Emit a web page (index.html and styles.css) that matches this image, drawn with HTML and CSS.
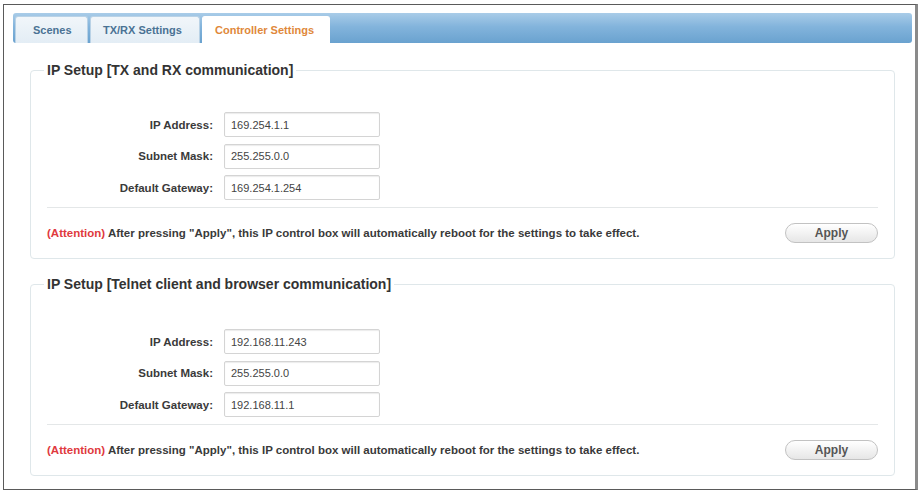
FILE: index.html
```html
<!DOCTYPE html>
<html>
<head>
<meta charset="utf-8">
<title>Controller Settings</title>
<link rel="stylesheet" href="styles.css">
</head>
<body>
<div class="frame">
  <div class="tabs">
    <div class="tab">Scenes</div>
    <div class="tab">TX/RX Settings</div>
    <div class="tab active">Controller Settings</div>
  </div>
  <div class="panel">
    <fieldset class="group first">
      <legend>IP Setup [TX and RX communication]</legend>
      <div class="rows">
        <label>IP Address:</label><div class="input">169.254.1.1</div>
        <label>Subnet Mask:</label><div class="input">255.255.0.0</div>
        <label>Default Gateway:</label><div class="input">169.254.1.254</div>
      </div>
      <div class="rule"></div>
      <div class="footer">
        <p class="note"><span class="attn">(Attention)</span> After pressing "Apply", this IP control box will automatically reboot for the settings to take effect.</p>
        <button class="apply">Apply</button>
      </div>
    </fieldset>
    <fieldset class="group second">
      <legend>IP Setup [Telnet client and browser communication]</legend>
      <div class="rows">
        <label>IP Address:</label><div class="input">192.168.11.243</div>
        <label>Subnet Mask:</label><div class="input">255.255.0.0</div>
        <label>Default Gateway:</label><div class="input">192.168.11.1</div>
      </div>
      <div class="rule"></div>
      <div class="footer">
        <p class="note"><span class="attn">(Attention)</span> After pressing "Apply", this IP control box will automatically reboot for the settings to take effect.</p>
        <button class="apply">Apply</button>
      </div>
    </fieldset>
  </div>
</div>
</body>
</html>
```
FILE: styles.css
```css
* { box-sizing: border-box; }
html, body { margin: 0; padding: 0; background: #ffffff; }
body {
  font-family: "Liberation Sans", Arial, sans-serif;
  color: #333;
  width: 923px;
  height: 493px;
  overflow: hidden;
}
.frame {
  margin: 4px 0 0 3px;
  width: 915px;
  height: 486px;
  border: 1px solid #5a5a5a;
  border-right: 3px solid #8a8a8a;
  padding: 8px 3px 0 9px;
  background: #fff;
}
.tabs {
  display: flex;
  align-items: flex-end;
  height: 30px;
  padding-left: 2px;
  gap: 2px;
  border-radius: 3px;
  background: linear-gradient(#a9cce8 0%, #83b4dc 45%, #6aa2cf 100%);
}
.tab {
  height: 27px;
  padding: 0 17px;
  display: flex;
  align-items: center;
  font-size: 11px;
  font-weight: bold;
  color: #4a7294;
  background: linear-gradient(#f1f6fa, #e3edf5);
  border: 1px solid #b9d2e6;
  border-bottom: none;
  border-radius: 3px 3px 0 0;
}
.tab:first-child { width: 73px; }
.tab:nth-child(2) { width: 110px; padding: 0 12px; }
.tab.active {
  width: 128px;
  padding: 0 12px;
  background: #fff;
  color: #e0883a;
  border-color: #fff;
}
.panel {
  padding: 19px 0 0 17px;
  width: 882px;
}
.group {
  margin: 0;
  padding: 0 16px 15px 16px;
  border: 1px solid #dfe7ea;
  border-radius: 4px;
  width: 865px;
}
.group.second { margin-top: 17px; }
legend {
  font-size: 14px;
  font-weight: bold;
  color: #333;
  padding: 0 3px;
  margin-left: -3px;
  line-height: 16px;
}
.rows {
  display: grid;
  grid-template-columns: 166px 156px;
  column-gap: 11px;
  row-gap: 6.5px;
  align-items: center;
  margin-top: 34px;
}
.second .rows { margin-top: 37px; }
label {
  text-align: right;
  font-size: 11.5px;
  font-weight: bold;
  color: #3a3a3a;
}
.input {
  height: 25px;
  border: 1px solid #d4d4d4;
  border-radius: 2px;
  box-shadow: inset 0 1px 1px #ececec;
  font-size: 11px;
  color: #444;
  padding: 0 6px;
  display: flex;
  align-items: center;
}
.rule {
  margin-top: 7px;
  height: 1px;
  background: #e4e7e8;
}
.footer {
  display: flex;
  justify-content: space-between;
  align-items: center;
  margin-top: 14px;
  height: 21px;
}
.note {
  margin: 0;
  font-size: 11.5px;
  font-weight: bold;
  color: #3a3a3a;
  white-space: nowrap;
}
.attn { color: #e0393e; }
.apply {
  width: 93px;
  height: 20px;
  margin-right: 0;
  border: 1px solid #c2c2c2;
  border-radius: 10px;
  background: linear-gradient(#ffffff, #e6e6e6);
  font-family: "Liberation Sans", Arial, sans-serif;
  font-size: 12px;
  font-weight: bold;
  color: #555;
  padding: 0;
}
```
